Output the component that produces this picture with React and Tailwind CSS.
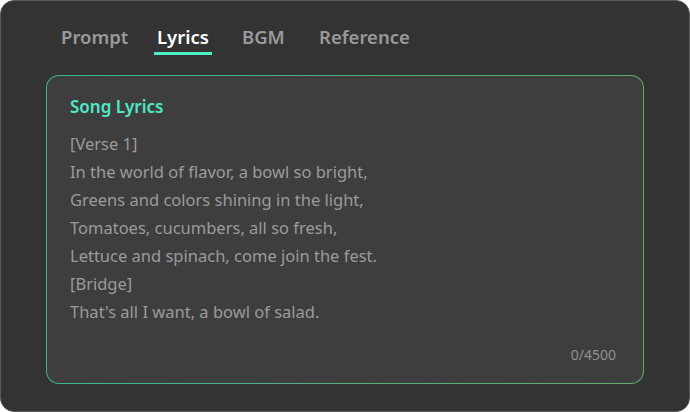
export default function App() {
  const lines = [
    "[Verse 1]",
    "In the world of flavor, a bowl so bright,",
    "Greens and colors shining in the light,",
    "Tomatoes, cucumbers, all so fresh,",
    "Lettuce and spinach, come join the fest.",
    "[Bridge]",
    "That's all I want, a bowl of salad.",
  ];
  const tabs = [
    { t: "Prompt", w: "w-[96px]" },
    { t: "Lyrics", w: "w-[85px]" },
    { t: "BGM", w: "w-[77px]" },
    { t: "Reference", w: "w-[100px]" },
  ];
  return (
    <div className="w-[690px] h-[412px] bg-white" style={{ fontFamily: '"Noto Sans", sans-serif' }}>
      <div className="w-full h-full rounded-[14px] border border-[#5a5a5a] bg-[#333333] px-[45px] pt-[20px] pb-[27px] flex flex-col">
        <div className="flex pl-[15px] h-[34px]">
          {tabs.map(({ t, w }) => (
            <div key={t} className={"flex " + w}>
              <div className="relative">
                <span
                  className={
                    "text-[18.5px] font-semibold leading-[32px] " +
                    (t === "Lyrics" ? "text-white" : "text-[#9a9a9a]")
                  }
                >
                  {t}
                </span>
                {t === "Lyrics" && (
                  <div className="absolute top-[31px] -left-[3px] -right-[3px] h-[3px] bg-[#4ef0cc]" />
                )}
              </div>
            </div>
          ))}
        </div>
        <div className="mt-[20px] flex-1 rounded-[13px] p-px bg-gradient-to-r from-[#3cb497] to-[#62ad68]">
          <div className="h-full rounded-[12px] bg-[#3e3e3e] pl-[23px] pr-[27px] pt-[18px] pb-[19px] flex flex-col">
            <div className="text-[17px] font-semibold text-[#4ee8c6] leading-[26px]">Song Lyrics</div>
            <div className="mt-[10px] text-[16.5px] text-[#9b9b9b] leading-[28px]">
              {lines.map((l, i) => (
                <div key={i}>{l}</div>
              ))}
            </div>
            <div className="mt-auto self-end text-[14px] text-[#8f8f8f] leading-[18px]">0/4500</div>
          </div>
        </div>
      </div>
    </div>
  );
}
